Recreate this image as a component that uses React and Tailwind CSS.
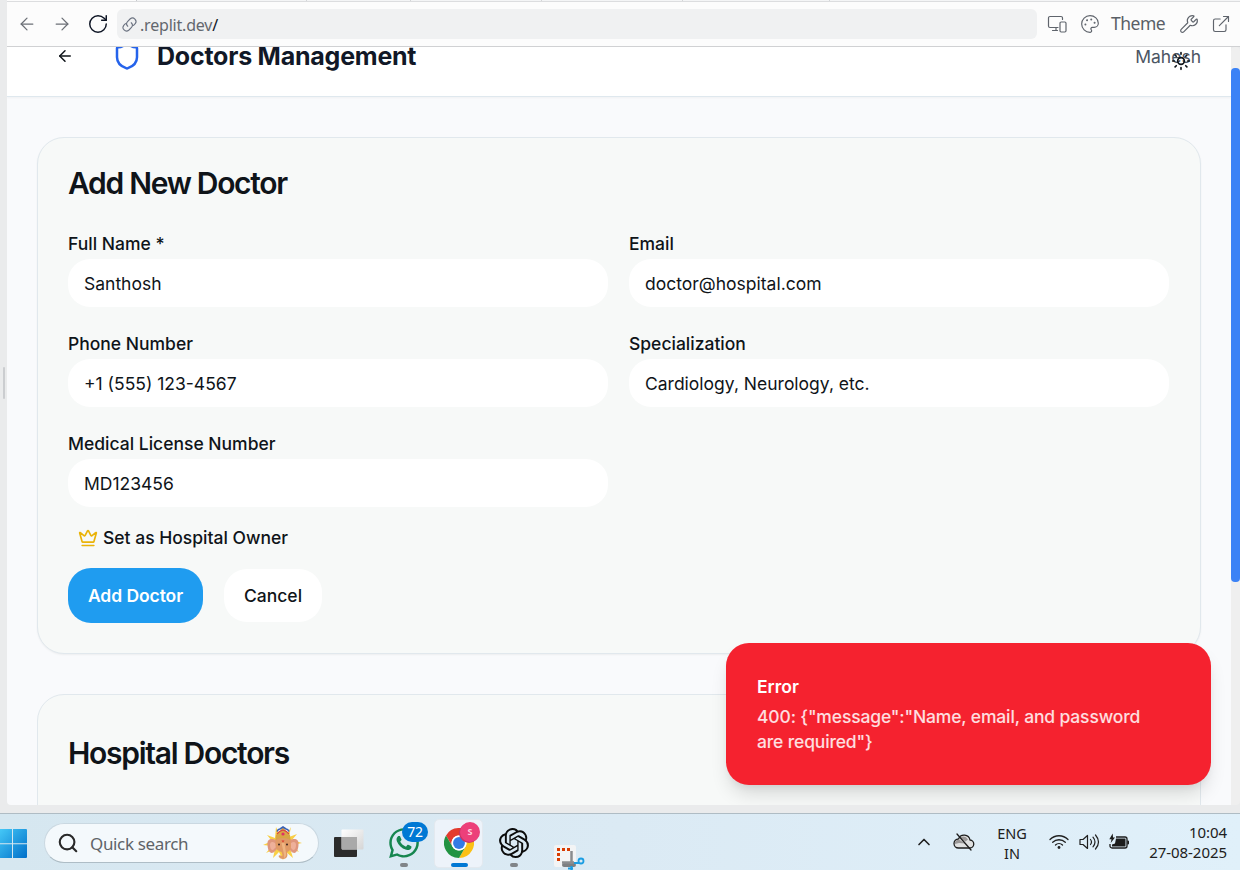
import React from "react";
import { ArrowLeft, ArrowRight, RotateCw, Shield, Sun, Crown, Wrench, ExternalLink, Palette, ChevronUp, Search } from "lucide-react";
import { SiOpenai } from "react-icons/si";
import { FaWhatsapp } from "react-icons/fa";

function LinkIcon() {
  return (
    <svg viewBox="0 0 24 24" className="h-[17px] w-[17px] shrink-0" fill="none" stroke="#6b7280" strokeWidth="1.600" strokeLinecap="round">
      <path d="M9.500 14.500a5 5 0 0 1 0-7l3.600-3.600a5 5 0 0 1 7 7l-2.400 2.400" />
      <path d="M14.500 9.500a5 5 0 0 1 0 7l-3.600 3.600a5 5 0 0 1-7-7l2.400-2.400" />
    </svg>
  );
}

function DevicesIcon() {
  return (
    <svg viewBox="0 0 20 20" className="h-5 w-5" fill="none" stroke="#5f646c" strokeWidth="1.200" strokeLinecap="round" strokeLinejoin="round">
      <path d="M11 13.500H3a1.500 1.500 0 0 1-1.500-1.500V4A1.500 1.500 0 0 1 3 2.500h11A1.500 1.500 0 0 1 15.500 4v1.500M5.500 16.500h5M9 13.500v3" />
      <rect x="13" y="8" width="6" height="10" rx="1.200" />
    </svg>
  );
}

function BrowserBar() {
  return (
    <div className="flex h-[45px] shrink-0 items-center border-b border-[#d0d1d3] bg-[#fcfcfc] pl-[10px] pr-[8px]">
      <ArrowLeft className="h-5 w-5 text-[#6b6f76]" strokeWidth={1.5} />
      <ArrowRight className="ml-[15px] h-5 w-5 text-[#6b6f76]" strokeWidth={1.5} />
      <RotateCw className="ml-[15px] h-[22px] w-[22px] text-[#0e1525]" strokeWidth={1.6} />
      <div className="ml-[8px] flex h-[30px] w-[920px] shrink-0 items-center rounded-[6px] bg-[#f0f1f2] pl-[4px]">
        <LinkIcon />
        <span className="ml-[2px] pt-[2px] font-['Noto_Sans',sans-serif] text-[16px] tracking-[-0.200px] text-[#63676e]">
          .replit.dev<span className="text-[#0e1525]">/</span>
        </span>
      </div>
      <div className="ml-[10px]"><DevicesIcon /></div>
      <Palette className="ml-[13px] h-5 w-5 text-[#5f646c]" strokeWidth={1.4} />
      <span className="-mt-px ml-[11px] w-[54px] whitespace-nowrap font-['Noto_Sans',sans-serif] text-[17.500px] tracking-[-0.500px] text-[#5a5f66]">Theme</span>
      <Wrench className="ml-[14px] h-5 w-5 -scale-x-100 rotate-90 text-[#5f646c]" strokeWidth={1.4} />
      <ExternalLink className="ml-[12px] h-5 w-5 text-[#5f646c]" strokeWidth={1.4} />
    </div>
  );
}

function PageHeader() {
  return (
    <header className="flex h-[50px] shrink-0 items-start border-b border-[#dfe8ee] bg-white pl-[49px] pr-[30px] shadow-[0_1px_2px_rgba(0,0,0,0.04)]">
      <ArrowLeft className="h-[18px] w-[18px] text-[#0f1419]" strokeWidth={2} />
      <Shield className="-mt-[6px] ml-[38px] h-[30px] w-[30px] text-[#2563eb]" />
      <h1 className="-mt-[6px] ml-[15px] text-[25px] font-bold leading-[31px] tracking-[-0.230px] text-[#111827]">Doctors Management</h1>
      <div className="relative ml-auto mt-[-3px] text-[17.500px] leading-[25px] text-[#4b5563]">
        Mahesh
        <Sun className="absolute left-[36px] top-[7px] h-5 w-5 text-[#0f1419]" strokeWidth={2} />
      </div>
    </header>
  );
}

function Field({ label, value }) {
  return (
    <div className="flex h-20 flex-col text-[17.500px] text-[#0f1419]">
      <label className="h-7 font-medium leading-[25px]">{label}</label>
      <div className="flex h-12 items-center rounded-[22px] bg-white pl-4 pt-px leading-[25px]">{value}</div>
    </div>
  );
}

function DoctorForm() {
  return (
    <section className="h-[517px] shrink-0 rounded-[27px] border border-[#e1e8ed] bg-[#f7f9f8] px-[30px] pt-[30px] shadow-[0_1px_2px_rgba(0,0,0,0.05)]">
      <h2 className="text-[30px] font-semibold leading-[30px] tracking-[-1.300px] text-[#0f1419]">Add New Doctor</h2>
      <div className="mt-[33px] grid grid-cols-[540px_540px] gap-x-[21px] gap-y-5">
        <Field label="Full Name *" value="Santhosh" />
        <Field label="Email" value="doctor@hospital.com" />
        <Field label="Phone Number" value="+1 (555) 123-4567" />
        <Field label="Specialization" value="Cardiology, Neurology, etc." />
        <Field label="Medical License Number" value="MD123456" />
      </div>
      <div className="mt-4 flex h-[22px] items-center gap-[5px] pl-[10px] text-[17.500px] font-medium text-[#0f1419]">
        <Crown className="h-5 w-5 text-[#eab308]" />
        Set as Hospital Owner
      </div>
      <div className="mt-[19px] flex items-center gap-[21px] text-[17.500px]">
        <button className="h-[55px] w-[135px] rounded-[23px] bg-[#1f9cf0] pt-px font-semibold tracking-[-0.080px] text-white">Add Doctor</button>
        <button className="h-[53px] w-[98px] rounded-[23px] bg-white pt-px font-medium text-[#0f1419]">Cancel</button>
      </div>
    </section>
  );
}

function Toast() {
  return (
    <div className="absolute left-[719px] top-[596px] h-[142px] w-[485px] rounded-[23px] bg-[#f5222f] px-[31px] pt-[31px] text-[17.500px] leading-[25px] text-white shadow-[0_12px_19px_-4px_rgba(0,0,0,0.14),0_5px_8px_-4px_rgba(0,0,0,0.08)]">
      <div className="font-semibold">Error</div>
      <div className="mt-[5px] font-medium tracking-[-0.150px] text-white/85">
        400: {"{"}"message":"Name, email, and password<br />are required"{"}"}
      </div>
    </div>
  );
}

function WindowsLogo() {
  return (
    <svg viewBox="0 0 27 30" className="h-[30px] w-[27px] shrink-0">
      <defs>
        <linearGradient id="win" x1="0" y1="0" x2="1" y2="1">
          <stop offset="0" stopColor="#45c8f7" />
          <stop offset="1" stopColor="#006fc9" />
        </linearGradient>
      </defs>
      <path fill="url(#win)" d="M0 0h12v14.300H0zM13 0h13q1 0 1 1v13.300H13zM0 15.300h12V29H0zM13 15.300h14V28q0 1-1 1H13z" />
    </svg>
  );
}

function ElephantIcon() {
  return (
    <svg viewBox="0 0 40 34" className="h-[34px] w-[40px]">
      <path fill="#f9cf45" d="M13 1l4 9 3-9 3 9 5-9-2 10 8-3-5 6 10 3-9 2 6 7-9-4 3 10-7-6-3 8-4-8-6 6 2-9-9 4 6-7-9-1 9-4-5-6 8 3z" />
      <path fill="#df967d" d="M14 15C9 11.500 4 13 4.500 18c0 4 1 8 4 9 3 0 4-3 6.500-5zM26 15c5-3.500 10-2 9.500 3 0 4-1 8-4 9-3 0-4-3-6.500-5z" />
      <path fill="#eeb09a" d="M12 17c-3-2-5-1-5 2s1 5 3 5l4-4zM28 17c3-2 5-1 5 2s-1 5-3 5l-4-4z" />
      <path fill="#e09a66" d="M12.500 13q7.500-5 15 0l.5 7q0 5-4 6l.5 3q-.5 4-4.500 4-3.500 0-4.500-3l1.500-1q2 2 2.500 0l-1-3q-5-1-6-6z" />
      <path fill="#efb582" d="M18.500 17h3l1.500 10q.5 4-2 5 .5-3-.5-6z" />
      <path fill="#d8a545" d="M12.500 14l.5-5 3-3 4-5 4 5 3 3 .5 5q-7.500-4-15 0z" />
      <path fill="none" stroke="#375fb4" strokeWidth="1.600" d="M14 5.500q1-2.500 3-2.500l3-2 3 2q2 0 3 2.500" />
      <path fill="none" stroke="#d93e43" strokeWidth="1.200" d="M14 8q2-3 6-4 4 1 6 4" />
      <circle cx="20" cy="8" r="1.600" fill="#df3166" />
      <path fill="#dc3b2e" d="M18.500 14.500h3l-1.500 2z" />
      <circle cx="16" cy="18.500" r="1" fill="#3b2420" />
      <circle cx="24" cy="18.500" r="1" fill="#3b2420" />
    </svg>
  );
}

function TaskViewIcon() {
  return (
    <svg viewBox="0 0 30 30" className="h-[30px] w-[30px]">
      <defs>
        <linearGradient id="tv" x1="0" y1="0" x2="1" y2="1">
          <stop offset="0" stopColor="#fff" />
          <stop offset="1" stopColor="#d5d5d5" />
        </linearGradient>
      </defs>
      <rect x="0" y="8" width="23" height="20" rx="1" fill="#2b2b2b" />
      <rect x="7.500" y="0.500" width="22" height="20" rx="1" fill="url(#tv)" />
      <path d="M8 8h15v12.500H8z" fill="#a9a9a9" />
    </svg>
  );
}

function ChromeIcon() {
  return (
    <svg viewBox="0 0 48 48" className="h-[30px] w-[30px]">
      <path fill="#e33b2e" d="M3.200 12A24 24 0 0 1 44.800 12H24a12 12 0 0 0-10.400 18z" />
      <path fill="#fbc116" d="M44.800 12A24 24 0 0 1 24 48l10.400-18A12 12 0 0 0 24 12z" />
      <path fill="#229342" d="M24 48A24 24 0 0 1 3.200 12l10.400 18a12 12 0 0 0 20.800 0z" />
      <circle cx="24" cy="24" r="12" fill="#fff" />
      <circle cx="24" cy="24" r="9.500" fill="#347be5" />
    </svg>
  );
}

function SnipIcon() {
  return (
    <svg viewBox="0 0 31 25" className="h-[25px] w-[31px]">
      <rect x="0" y="0" width="22" height="22" rx="2" fill="#f3f4f5" />
      <rect x="8" y="18" width="14" height="4" rx="2" fill="#7d7f82" />
      <path fill="#d83b01" d="M3 3h3v3H3zM8 3h3v3H8zM13 3h3v3h-3zM3 8h3v3H3zM3 13h3v3H3z" />
      <path d="M17.500 6v13M8 17.500h12" stroke="#8a8c8f" strokeWidth="2.500" />
      <path d="M20 18h5M17.500 21v4M14 23.500h5" stroke="#1b9de2" strokeWidth="2.200" />
      <circle cx="27" cy="16" r="2.500" fill="none" stroke="#1b9de2" strokeWidth="1.800" />
    </svg>
  );
}

function CloudOffIcon() {
  return (
    <svg viewBox="0 0 22 18" className="h-[18px] w-[22px]" fill="none" stroke="#1c1c1c" strokeWidth="1.300" strokeLinecap="round" strokeLinejoin="round">
      <path fill="#dfe0e0" d="M5.500 15h11a4 4 0 0 0 .5-8A6 6 0 0 0 5.500 6 4.500 4.500 0 0 0 5.500 15z" />
      <path stroke="none" fill="#9a9797" d="M2 9q1-2.500 4-2.500l6 4L6 10l-4 1zM7 4.500q5-3 8 2l-2.500 2z" />
      <path d="M4 1l14 16" />
    </svg>
  );
}

function WifiIcon() {
  return (
    <svg viewBox="0 0 20 16" className="h-4 w-5" fill="none" stroke="#202020" strokeWidth="1.300" strokeLinecap="round">
      <path d="M1 5.500a12.700 12.700 0 0 1 18 0M3.700 8.300a9 9 0 0 1 12.600 0M6.500 11a5 5 0 0 1 7 0" />
      <circle cx="10" cy="13.500" r="1.400" fill="#202020" stroke="none" />
    </svg>
  );
}

function SpeakerIcon() {
  return (
    <svg viewBox="0 0 21 18" className="h-[18px] w-[21px]" fill="none" stroke="#202020" strokeWidth="1.200" strokeLinecap="round" strokeLinejoin="round">
      <path d="M1 6.500h3l4.500-4v13l-4.500-4H1zM11.500 6.500q2 2.500 0 5M14 4.200q4 4.800 0 9.600M16.500 2q6 7 0 14" />
    </svg>
  );
}

function BatteryIcon() {
  return (
    <svg viewBox="0 0 20 18" className="h-[18px] w-5">
      <path d="M7 4h9a2 2 0 0 1 2 2v7a2 2 0 0 1-2 2H3a2 2 0 0 1-2-2v-2" fill="none" stroke="#1c1c1c" strokeWidth="1.300" />
      <path d="M7 5.500h9.500v8H3v-2l3-1zM18.300 7.500h.7q1 0 1 1v2q0 1-1 1h-.7zM3.700.5L.3 6.300h2.200L1.700 10 6 4.500H4z" fill="#1c1c1c" />
    </svg>
  );
}

function Taskbar() {
  return (
    <footer className="flex h-[57px] shrink-0 items-start border-t border-[#afbcc4] bg-gradient-to-r from-[#d6e7f0] via-[#dbeaf4] to-[#e0f0fa] font-['Noto_Sans',sans-serif]">
      <div className="mt-[15px]"><WindowsLogo /></div>
      <div className="ml-[17px] mt-[9px] flex h-[40px] w-[275px] shrink-0 items-center rounded-full border border-[#cad8e1] border-b-[#aebdc6] bg-[#f4f9fc] pl-[12px]">
        <Search className="h-[22px] w-[22px] text-[#292929]" strokeWidth={2.300} />
        <span className="ml-[11px] w-[100px] whitespace-nowrap pt-[2px] text-[17px] tracking-[-0.350px] text-[#5f6468]">Quick search</span>
        <div className="ml-[73px]"><ElephantIcon /></div>
      </div>
      <div className="ml-[15px] mt-[15px] w-[30px] shrink-0"><TaskViewIcon /></div>
      <div className="relative ml-[24px] mt-[5px] h-[50px] w-[42px] shrink-0">
        <FaWhatsapp className="mt-[7px] h-[34px] w-[32px] text-[#16864f]" />
        <span className="absolute left-[14px] top-[3px] flex h-5 w-[26px] items-center justify-center rounded-full bg-[#0078d4] text-[14px] leading-none tracking-[-0.300px] text-white">72</span>
        <span className="absolute left-[12px] top-[44px] h-1 w-2 rounded-full bg-[#808488]" />
      </div>
      <div className="relative ml-[4px] mt-[5px] h-[49px] w-[49px] shrink-0 rounded-[5px] border border-[#e3e9ef] bg-[#edf3fa] pl-[9px] pt-[8px]">
        <ChromeIcon />
        <span className="absolute left-[25px] top-[2px] flex h-5 w-5 items-center justify-center rounded-full bg-[#ec407a] text-[9px] font-bold text-[#ffd0df] shadow-[-1px_1px_0_#c83265]">S</span>
        <span className="absolute left-[16px] top-[43px] h-1 w-[17px] rounded-full bg-[#0078d4]" />
      </div>
      <div className="ml-[16px] mt-[14px] flex h-[40px] w-[30px] shrink-0 flex-col items-center">
        <SiOpenai className="h-[30px] w-[30px] shrink-0 text-[#0c0c0c]" />
        <span className="mt-[5px] h-1 w-2 shrink-0 rounded-full bg-[#808488]" />
      </div>
      <div className="ml-[25px] mt-[31px] shrink-0"><SnipIcon /></div>
      <div className="ml-auto mr-[13px] flex h-[55px] items-center text-[14.500px] leading-5 text-[#202020]">
        <ChevronUp className="mt-px h-5 w-5" strokeWidth={2} />
        <div className="ml-[19px]"><CloudOffIcon /></div>
        <div className="ml-[19px] w-[36px] pt-[3px] text-center">ENG<br />IN</div>
        <div className="ml-[19px] pt-px"><WifiIcon /></div>
        <div className="ml-[10px] pt-px"><SpeakerIcon /></div>
        <div className="ml-[9px] pt-px"><BatteryIcon /></div>
        <div className="ml-[18px] w-[80px] whitespace-nowrap text-right text-[15px] tracking-[-0.050px]">10:04<br />27-08-2025</div>
      </div>
    </footer>
  );
}

export default function App() {
  return (
    <div className="flex h-[870px] w-[1240px] flex-col overflow-hidden bg-[#eaebec] font-['Inter',sans-serif]">
      <div className="flex h-[805px] shrink-0">
        <div className="flex w-[7px] shrink-0 items-center pl-[3px]">
          <div className="mb-[40px] h-[32px] w-[2px] rounded-full bg-[#cbcdd0]" />
        </div>
        <div className="flex w-[1233px] flex-col overflow-hidden rounded-b-[4px]">
          <div className="flex h-[2px] shrink-0 border-b border-[#dcdddf] bg-[#f4f5f6]">
            <div className="w-[130px] border-r border-[#c8cacd] bg-[#fcfcfc]" />
            <div className="w-[170px] border-r border-[#d4d6d8]" />
            <div className="w-[104px] border-r border-[#d4d6d8]" />
            <div className="w-[131px] border-r border-[#d4d6d8]" />
            <div className="w-[141px] border-r border-[#d4d6d8]" />
            <div className="w-[147px] border-r border-[#d4d6d8]" />
          </div>
          <BrowserBar />
          <main className="relative flex h-[758px]">
            <div className="flex h-[758px] w-[1224px] flex-col overflow-hidden bg-[#f9fafc]">
              <PageHeader />
              <div className="flex flex-col gap-10 px-[30px] pt-[40px]">
                <DoctorForm />
                <section className="h-[300px] shrink-0 rounded-[27px] border border-[#e1e8ed] bg-[#f7f9f8] px-[30px] pt-[43px]">
                  <h2 className="text-[30px] font-semibold leading-[30px] tracking-[-1.280px] text-[#0f1419]">Hospital Doctors</h2>
                </section>
              </div>
            </div>
            <div className="w-[9px] rounded-t-[4px] bg-[#efefef] pt-[21px]">
              <div className="h-[514px] rounded-[4px] bg-[#3b82f6]" />
            </div>
            <Toast />
          </main>
        </div>
      </div>
      <div className="h-2 shrink-0 bg-[#eaebec]" />
      <Taskbar />
    </div>
  );
}
